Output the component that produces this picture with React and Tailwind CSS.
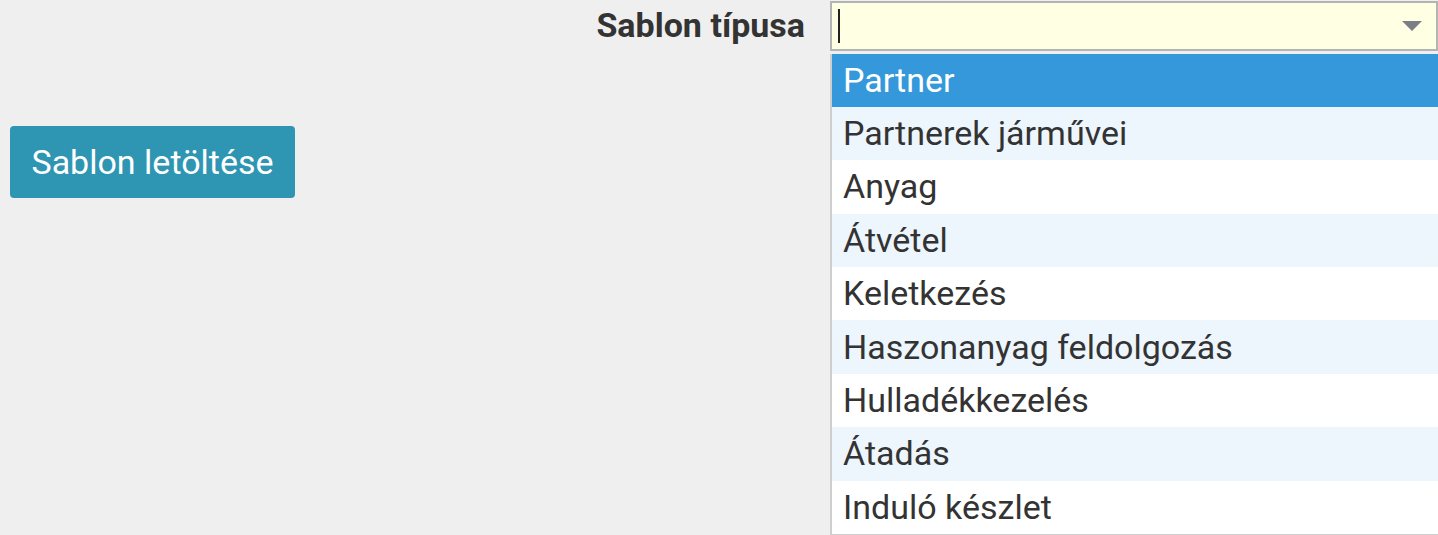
import React from 'react';

const options = [
  'Partner',
  'Partnerek járművei',
  'Anyag',
  'Átvétel',
  'Keletkezés',
  'Haszonanyag feldolgozás',
  'Hulladékkezelés',
  'Átadás',
  'Induló készlet',
];

const TemplateSelect = () => {
  return (
    <div className="relative w-[608px] shrink-0">
      <div className="h-[50px] bg-[#ffffe3] border-2 border-[#b4b4b4] flex items-center justify-between pl-[6px] pr-[14px]">
        <span className="w-[2px] h-[34px] bg-[#222]" />
        <svg width="20" height="10" viewBox="0 0 20 10">
          <path d="M0 0 L20 0 L10 10 Z" fill="#7b7f85" />
        </svg>
      </div>
      {/* open dropdown list */}
      <ul className="absolute top-[53px] left-0 w-full border-l-2 border-b-2 border-[#cfcfcf] bg-white z-10">
        {options.map((opt, i) => (
          <li
            key={opt}
            className={
              'h-[53.4px] flex items-center pl-[11px] text-[34px] ' +
              (i === 0
                ? 'bg-[#3498db] text-white'
                : i % 2 === 1
                ? 'bg-[#edf5fd] text-[#333]'
                : 'bg-white text-[#333]')
            }
          >
            {opt}
          </li>
        ))}
      </ul>
    </div>
  );
};

export default function App() {
  return (
    <div
      className="relative w-full h-[535px] overflow-hidden bg-[#efefef]"
      style={{ fontFamily: 'Roboto, "Liberation Sans", sans-serif' }}
    >
      <div className="flex items-center justify-end">
        <label className="text-[34px] font-bold text-[#333] mr-[25px]">Sablon típusa</label>
        <TemplateSelect />
      </div>
      <button className="ml-[10px] mt-[75px] w-[285px] h-[72px] rounded-[4px] bg-[#2e95b2] text-white text-[34px]">
        Sablon letöltése
      </button>
    </div>
  );
}
